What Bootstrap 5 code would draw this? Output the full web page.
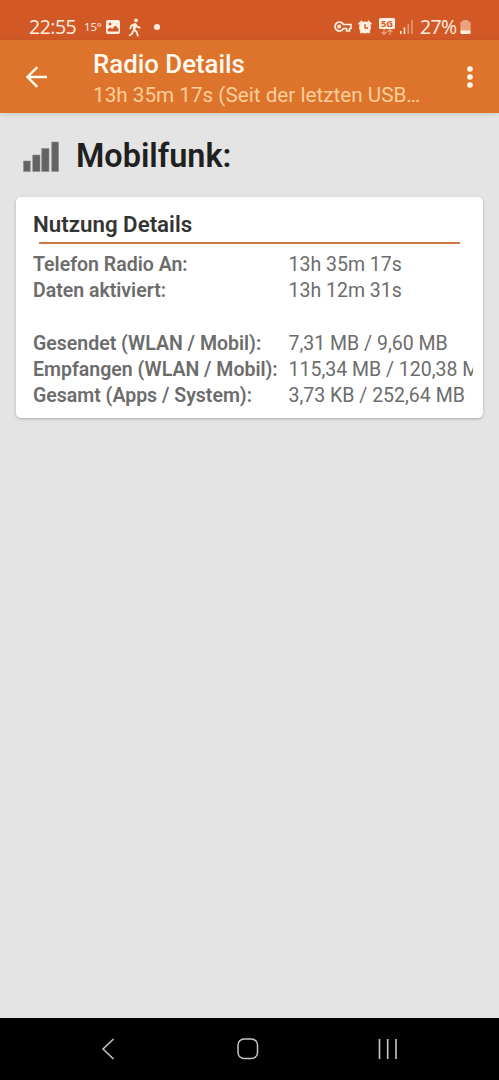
<!DOCTYPE html>
<html lang="de">
<head>
<meta charset="utf-8">
<meta name="viewport" content="width=device-width, initial-scale=1">
<title>Radio Details</title>
<link href="https://cdn.jsdelivr.net/npm/bootstrap@5.3.0/dist/css/bootstrap.min.css" rel="stylesheet">
<style>
body{font-family:Roboto,"Liberation Sans",sans-serif;background:#e4e4e4;height:1080px;overflow:hidden}
svg{display:block;flex:none}
.statusbar{height:40px;background:#d25926;color:#fff0e3;padding:14px 28px 0 29px;font-family:"Open Sans",sans-serif;line-height:26px}
.clock{font-size:19.5px;width:55px;letter-spacing:-.5px}
.temp{font-size:11.5px;width:22px;letter-spacing:-.2px}
.percent{font-size:19.5px;width:40px;letter-spacing:-.7px}
.appbar{height:73px;background:#de742b;color:#fffaf0;padding:0 20px 0 25px;box-shadow:0 1px 5px rgba(0,0,0,.13)}
.titles{margin-left:45px;padding-top:4px;width:340px}
.title{font-size:25.8px;line-height:30px;font-weight:500}
.subtitle{font-size:20.7px;line-height:26px;margin-top:3px;color:#fbcf9b}
.section-head{height:84px;padding:3px 23px 0}
.section-head h1{font-size:32.4px;font-weight:600;color:#202020;margin-left:17px;line-height:38px;position:relative;top:-1px}
.usage{margin:0 16px;height:221px;border:0;border-radius:5px;padding:12px 10px 0 17px;box-shadow:0 1px 3px rgba(0,0,0,.25);color:#6c6c6c}
.usage h2{font-size:22.3px;line-height:30px;font-weight:600;color:#343434}
.rule{height:1.6px;background:#cf7947;margin:3px 13px 8.4px 6px}
.usage dl{font-size:19.5px;line-height:26.3px;display:grid;grid-template-columns:255.5px 1fr}
.usage dt{font-weight:600}
.usage dd{margin:0}
.gap-row{grid-column:1/3;height:26.3px}
.navbuttons{height:62px;background:#000;padding:0 101px 0 101px}
</style>
</head>
<body class="d-flex flex-column">
<div class="statusbar d-flex align-items-center">
  <span class="clock">22:55</span><span class="temp">15°</span>
  <svg width="14" height="14" viewBox="0 0 14 14"><path fill="currentColor" fill-rule="evenodd" d="M2 0h10q2 0 2 2v10q0 2-2 2H2q-2 0-2-2V2q0-2 2-2zM1.700 11.500h10.800V8.700L9.200 5.500 6.200 9 4.300 7.200 1.700 9.500zM4 2.600a1.400 1.400 0 1 0 .1 0z"/></svg>
  <svg class="ms-2" width="14" height="19" viewBox="0 0 14 19" fill="none" stroke="currentColor" stroke-width="1.8" stroke-linecap="round" stroke-linejoin="round"><circle cx="8" cy="2.300" r="1.900" fill="currentColor" stroke="none"/><path d="M7 5.800 5.700 11.500 8.700 14 9.800 17.700M5.400 12.500 4 15.600 1.800 17.400M7 6 3.400 7.600 2.300 10.300M7.500 6.200 9 8.700 11.600 9.700"/><path stroke-width="2.800" d="M7 6.500 6.300 10.500"/></svg>
  <svg style="margin-left:12px" width="6" height="6"><circle cx="3" cy="3" r="3" fill="currentColor"/></svg>
  <div class="ms-auto d-flex align-items-center">
    <svg width="18" height="12" viewBox="0 0 18 12" fill="none" stroke="currentColor" stroke-width="1.700" stroke-linejoin="round"><path d="M9.500 3.500H17v4h-1.500V10h-3V7.500h-3A4.500 4.500 0 1 1 9.500 3.500z"/><circle cx="5.200" cy="5.500" r="1.200"/></svg>
    <svg style="margin-left:6px" width="14" height="14" viewBox="0 0 14 14"><g fill="currentColor"><circle cx="7" cy="7.500" r="5.900"/><path d="M0 3.800 3.600.2l1.200 1.200L1.200 5zM14 3.800 10.400.2 9.200 1.400 12.800 5zM1.500 12 3 13.800l2-2L3.500 10.300zM12.500 12 11 13.800l-2-2 1.500-1.500z"/></g><path d="M7 4v4h3" fill="none" stroke="#d25926" stroke-width="1.300"/></svg>
    <svg style="margin-left:7px" width="16" height="18" viewBox="0 0 16 18"><rect width="16" height="11" rx="1.500" fill="currentColor"/><text x="8" y="8.900" font-size="9.300" font-weight="700" text-anchor="middle" fill="#d25926" style="line-height:1">5G</text><path d="M5 11v5.500M2.500 14 5 16.500 7.500 14M11 17v-5M8.500 14 11 11.500 13.500 14" fill="none" stroke="#efa680" stroke-width="1.200"/></svg>
    <svg style="margin-left:5px" width="13" height="14"><g fill="currentColor"><path d="M0 11h1.500v3H0z"/><path d="M3.700 7.500h1.500V14H3.700z"/><path opacity=".45" d="M7.500 4H9v10H7.500zM11.200 0h1.500v14h-1.500z"/></g></svg>
    <span class="percent" style="margin-left:7px">27%</span>
    <svg width="11" height="14" viewBox="0 0 11 14"><path fill="#eba27f" d="M3 0h5v1.500h2q.6 0 .6.700V11H.400V2.200q0-.7.600-.7h2z"/><path fill="currentColor" d="M.400 10.500h10.200v2q0 1.500-1.500 1.500H1.900Q.400 14 .400 12.500z"/></svg>
  </div>
</div>
<header class="appbar d-flex align-items-center">
  <svg width="23" height="22" viewBox="0 0 23 22" fill="none" stroke="currentColor" stroke-width="2.400"><path d="M22 11H3M12.300 1.200 2.500 11l9.800 9.800"/></svg>
  <div class="titles"><div class="title">Radio Details</div><div class="subtitle text-nowrap">13h 35m 17s (Seit der letzten USB…</div></div>
  <svg class="ms-auto" style="margin-right:6px" width="6" height="22" fill="currentColor"><circle cx="3" cy="3" r="2.800"/><circle cx="3" cy="11" r="2.800"/><circle cx="3" cy="19" r="2.800"/></svg>
</header>
<main class="flex-grow-1">
  <div class="section-head d-flex align-items-center">
    <svg width="36" height="31" viewBox="0 0 36 31" fill="#636363" stroke="#8b8b8b" stroke-width=".6"><path d="M.500 20h6.800v10.500H.500zM9.700 14h7.300v16.500H9.700zM18.700 7.500H26v23h-7.300zM28.700 1h6.800v29.500h-6.800z"/></svg>
    <h1 class="mb-0">Mobilfunk:</h1>
  </div>
  <section class="usage card">
    <h2 class="mb-0">Nutzung Details</h2>
    <div class="rule"></div>
    <dl class="mb-0 text-nowrap">
      <dt>Telefon Radio An:</dt><dd>13h 35m 17s</dd>
      <dt>Daten aktiviert:</dt><dd>13h 12m 31s</dd>
      <div class="gap-row"></div>
      <dt>Gesendet (WLAN / Mobil):</dt><dd>7,31 MB / 9,60 MB</dd>
      <dt>Empfangen (WLAN / Mobil):</dt><dd class="overflow-hidden">115,34 MB / 120,38 MB</dd>
      <dt>Gesamt (Apps / System):</dt><dd>3,73 KB / 252,64 MB</dd>
    </dl>
  </section>
</main>
<nav class="navbuttons d-flex align-items-center justify-content-between">
  <svg width="14" height="22" viewBox="0 0 14 22" fill="none" stroke="#c8c8c8" stroke-width="1.500"><path d="M12.500 1 2 11l10.500 10"/></svg>
  <svg style="margin-left:3px" width="22" height="22" fill="none" stroke="#c8c8c8" stroke-width="1.500"><rect x="1" y="1" width="19.500" height="19.500" rx="6"/></svg>
  <svg width="20" height="20" stroke="#c8c8c8" stroke-width="1.600"><path d="M1.500 0v20M9.700 0v20M18 0v20"/></svg>
</nav>
<script src="https://cdn.jsdelivr.net/npm/bootstrap@5.3.0/dist/js/bootstrap.bundle.min.js"></script>
</body>
</html>
